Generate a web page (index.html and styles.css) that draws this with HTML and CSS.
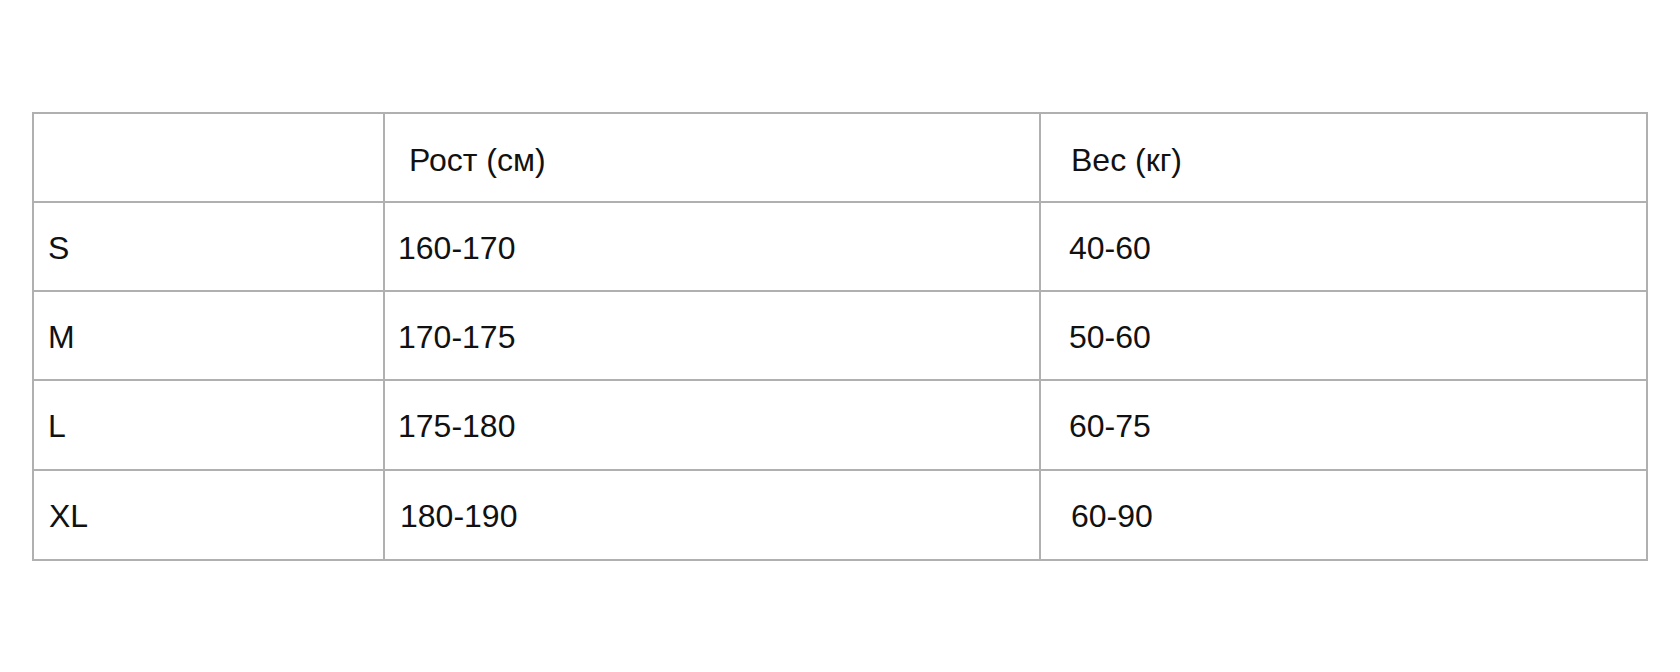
FILE: index.html
```html
<!DOCTYPE html>
<html lang="ru">
<head>
<meta charset="utf-8">
<title>Таблица размеров</title>
<link rel="stylesheet" href="styles.css">
</head>
<body>
<main class="page">
  <table class="sizes">
    <thead>
      <tr class="row row-head">
        <th class="cell c1"></th>
        <th class="cell c2 head-c2">Рост (см)</th>
        <th class="cell c3 head-c3">Вес (кг)</th>
      </tr>
    </thead>
    <tbody>
      <tr class="row">
        <td class="cell c1">S</td>
        <td class="cell c2">160-170</td>
        <td class="cell c3">40-60</td>
      </tr>
      <tr class="row">
        <td class="cell c1">M</td>
        <td class="cell c2">170-175</td>
        <td class="cell c3">50-60</td>
      </tr>
      <tr class="row row-tall">
        <td class="cell c1">L</td>
        <td class="cell c2">175-180</td>
        <td class="cell c3">60-75</td>
      </tr>
      <tr class="row row-tall">
        <td class="cell c1 last-c1">XL</td>
        <td class="cell c2 last-c2">180-190</td>
        <td class="cell c3 last-c3">60-90</td>
      </tr>
    </tbody>
  </table>
</main>
</body>
</html>
```

FILE: styles.css
```css
html, body {
  margin: 0;
  padding: 0;
  background: #ffffff;
}

.page {
  padding: 112px 0 0 32px;
}

.sizes {
  border-collapse: separate;
  border-spacing: 0;
  table-layout: fixed;
  width: 1616px;
  border-top: 2px solid #b0b0b0;
  border-left: 2px solid #b0b0b0;
  font-family: "Liberation Sans", Arial, sans-serif;
  font-size: 32px;
  color: #111111;
}

.row {
  height: 89px;
}

.row-tall {
  height: 90px;
}

.cell {
  box-sizing: border-box;
  border-right: 2px solid #b0b0b0;
  border-bottom: 2px solid #b0b0b0;
  padding: 3px 0 0 0;
  text-align: left;
  font-weight: normal;
  vertical-align: middle;
  line-height: normal;
}

.row-head .cell {
  padding-top: 5px;
}

.c1 {
  width: 351px;
  padding-left: 14px;
}

.c2 {
  width: 656px;
  padding-left: 13px;
}

.c3 {
  width: 607px;
  padding-left: 28px;
}

.head-c2 {
  padding-left: 24px;
}

.head-c3 {
  padding-left: 30px;
}

.last-c1 {
  padding-left: 15px;
}

.last-c2 {
  padding-left: 15px;
}

.last-c3 {
  padding-left: 30px;
}
```
